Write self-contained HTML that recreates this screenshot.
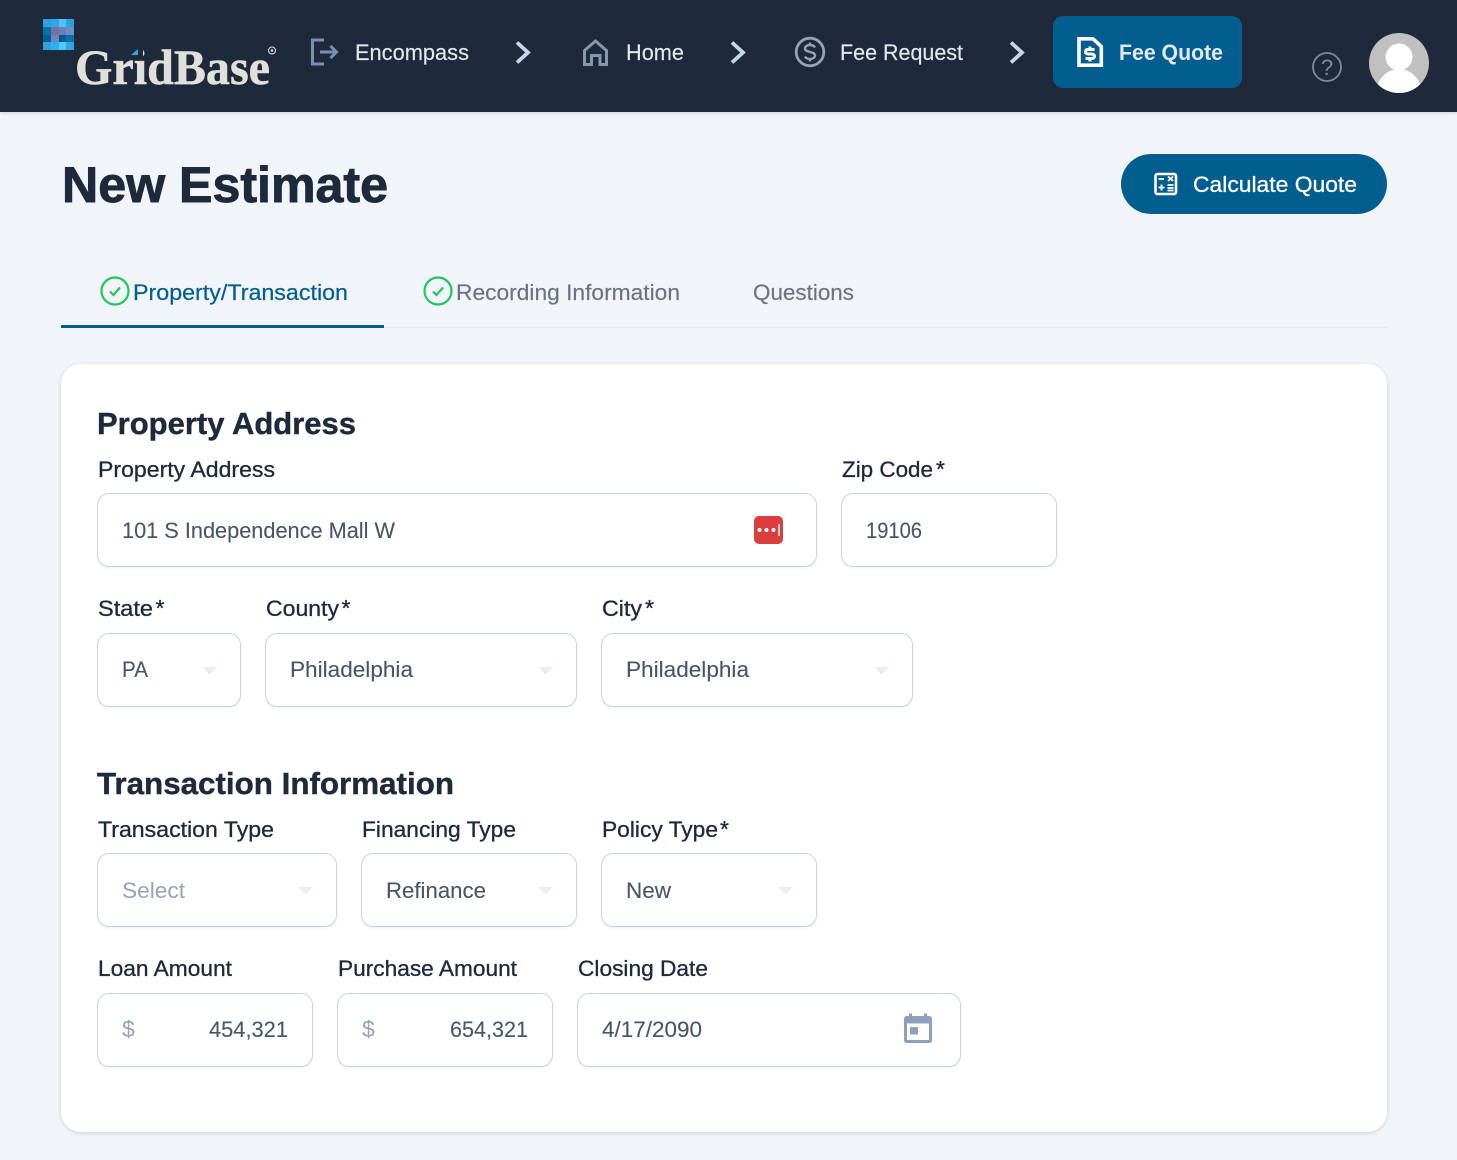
<!DOCTYPE html>
<html lang="en">
<head>
<meta charset="utf-8">
<title>New Estimate</title>
<style>
html,body{margin:0;padding:0;width:1457px;height:1160px;overflow:hidden;background:#f1f5f9;font-family:"Liberation Sans",sans-serif}
.abs{position:absolute;box-sizing:border-box}
#nav{left:0;top:0;width:1457px;height:112px;background:#1e293b;box-shadow:0 1px 3px rgba(0,0,0,.15)}
#fq{left:1053px;top:16px;width:189px;height:72px;background:#025e8f;border-radius:10px}
#cq{left:1121px;top:154px;width:266px;height:60px;background:#025e8f;border-radius:30px}
#card{left:61px;top:364px;width:1326px;height:768px;background:#fff;border-radius:20px;box-shadow:0 1px 4px rgba(15,23,42,.16)}
.i{position:absolute;box-sizing:border-box;background:#fff;border:1px solid #cbd5e1;border-radius:12px;height:74px;box-shadow:0 1px 2px rgba(15,23,42,.07)}
#overlay{position:absolute;left:0;top:0}
text{font-family:"Liberation Sans",sans-serif}
.nv{font-size:22px;fill:#e2e8f0;stroke:#e2e8f0;stroke-width:.15px}
.l{font-size:22px;fill:#1e293b;stroke:#1e293b;stroke-width:.3px}
.v{font-size:22px;fill:#475569;stroke:#475569;stroke-width:.1px}
.h{font-size:31px;font-weight:700;fill:#1e293b;stroke:#1e293b;stroke-width:.4px}
.t{font-size:22px;fill:#6b7280;stroke:#6b7280;stroke-width:.15px}
</style>
</head>
<body>
<div class="abs" id="nav"></div>
<div class="abs" id="fq"></div>
<div class="abs" id="cq"></div>
<div class="abs" style="left:61px;top:327px;width:1326px;height:1px;background:#e2e8f0"></div>
<div class="abs" style="left:61px;top:325px;width:323px;height:3px;background:#025e8f"></div>
<div class="abs" id="card"></div>

<div class="i" style="left:97px;top:493px;width:720px"></div>
<div class="i" style="left:841px;top:493px;width:216px"></div>
<div class="i" style="left:97px;top:633px;width:144px"></div>
<div class="i" style="left:265px;top:633px;width:312px"></div>
<div class="i" style="left:601px;top:633px;width:312px"></div>
<div class="i" style="left:97px;top:853px;width:240px"></div>
<div class="i" style="left:361px;top:853px;width:216px"></div>
<div class="i" style="left:601px;top:853px;width:216px"></div>
<div class="i" style="left:97px;top:993px;width:216px"></div>
<div class="i" style="left:337px;top:993px;width:216px"></div>
<div class="i" style="left:577px;top:993px;width:384px"></div>

<svg id="overlay" width="1457" height="1160" viewBox="0 0 1457 1160" xmlns="http://www.w3.org/2000/svg">
  <!-- logo mosaic -->
  <g shape-rendering="crispEdges">
    <rect x="43" y="19" width="8" height="8" fill="#2f9fdf"/><rect x="51" y="19" width="8" height="8" fill="#2fa8ea"/><rect x="59" y="19" width="7" height="8" fill="#4cc4f5"/><rect x="66" y="19" width="8" height="8" fill="#2f9fdf"/>
    <rect x="43" y="27" width="8" height="8" fill="#0672a8"/><rect x="51" y="27" width="8" height="8" fill="#7a6f9f"/><rect x="59" y="27" width="7" height="8" fill="#6a80b5"/><rect x="66" y="27" width="8" height="8" fill="#6a90c5"/>
    <rect x="43" y="35" width="8" height="7" fill="#04608f"/><rect x="51" y="35" width="8" height="7" fill="#6a86bd"/><rect x="59" y="35" width="7" height="7" fill="#045a8c"/><rect x="66" y="35" width="8" height="7" fill="#0675ae"/>
    <rect x="43" y="42" width="8" height="8" fill="#2fa0e0"/><rect x="51" y="42" width="8" height="8" fill="#2fb0ee"/><rect x="59" y="42" width="7" height="8" fill="#4fc8fa"/><rect x="66" y="42" width="8" height="8" fill="#2fa5e5"/>
  </g>
  <text x="75" y="84" textLength="195" lengthAdjust="spacingAndGlyphs" style="font-family:'Liberation Serif',serif;font-weight:700;font-size:50px;fill:#e0e1da;stroke:#e0e1da;stroke-width:.5px">GridBase</text>
  <rect x="128" y="45" width="15" height="14.500" fill="#1e293b"/>
  <path d="M131 55 L138 49 V55 Z" fill="#2fa8ea"/>
  <circle cx="272" cy="50.500" r="3.500" fill="none" stroke="#e0e1da" stroke-width="1"/>
  <circle cx="272" cy="50.500" r="1.300" fill="#e0e1da"/>

  <!-- breadcrumb icons -->
  <path d="M324 40 H312.500 V64 H324" fill="none" stroke="#7d8fb0" stroke-width="3"/>
  <path d="M320 52 H336 M330.500 46 L336.500 52 L330.500 58" fill="none" stroke="#7d8fb0" stroke-width="3"/>
  <text class="nv" x="355" y="60" textLength="114" lengthAdjust="spacingAndGlyphs">Encompass</text>

  <path d="M517 42.500 L528 52.500 L517 62.500" fill="none" stroke="#c5d5ea" stroke-width="3.800"/>
  <path d="M595.500 41 L584.500 50.500 V64.500 H591.500 V55.500 H600 V64.500 H606.500 V50.500 Z" fill="none" stroke="#8797ad" stroke-width="3"/>
  <text class="nv" x="626" y="60" textLength="58" lengthAdjust="spacingAndGlyphs">Home</text>

  <path d="M732 42.500 L743 52.500 L732 62.500" fill="none" stroke="#c5d5ea" stroke-width="3.800"/>
  <circle cx="810" cy="52" r="13.800" fill="none" stroke="#94a3b8" stroke-width="2.800"/>
  <path d="M815 47.500 C814 45.500 812 45 810 45 C807 45 805 46.500 805 48.500 C805 53 815 51 815 55.500 C815 57.500 813 59 810 59 C808 59 806 58.500 805 56.500 M810 42.500 V45 M810 59 V61.500" fill="none" stroke="#94a3b8" stroke-width="2.400"/>
  <text class="nv" x="840" y="60" textLength="123" lengthAdjust="spacingAndGlyphs">Fee Request</text>

  <path d="M1011 42.500 L1022 52.500 L1011 62.500" fill="none" stroke="#c5d5ea" stroke-width="3.800"/>
  <path d="M1079 38.800 H1093 L1101.300 46.500 V65.200 H1079 Z" fill="none" stroke="#fff" stroke-width="3.600"/>
  <path d="M1094.500 49.500 H1088 C1086 49.500 1085.500 50.500 1085.500 51.700 C1085.500 53 1086.500 54 1088 54 H1092 C1093.500 54 1094.500 55 1094.500 56.300 C1094.500 57.500 1093.500 58.500 1092 58.500 H1085.500 M1090 46.500 V49.500 M1090 58.500 V61.500" fill="none" stroke="#fff" stroke-width="3"/>
  <text x="1119" y="60" textLength="104" lengthAdjust="spacingAndGlyphs" style="font-size:22px;font-weight:700;fill:#e2e8f0">Fee Quote</text>

  <!-- help + avatar -->
  <circle cx="1327" cy="67" r="14" fill="none" stroke="#7d8ba0" stroke-width="1.800"/>
  <text x="1327" y="75" text-anchor="middle" style="font-size:22px;fill:#7d8ba0">?</text>
  <defs><clipPath id="av"><circle cx="1399" cy="63" r="30"/></clipPath></defs>
  <circle cx="1399" cy="63" r="30" fill="#c0c0c0"/>
  <g clip-path="url(#av)" fill="#fff">
    <circle cx="1399" cy="57" r="13.500"/>
    <ellipse cx="1399" cy="94" rx="23" ry="25"/>
  </g>

  <!-- header row -->
  <text x="62" y="202" textLength="326" lengthAdjust="spacingAndGlyphs" style="font-size:50px;font-weight:700;fill:#1e293b;stroke:#1e293b;stroke-width:.9px">New Estimate</text>
  <rect x="1155.500" y="174" width="20.500" height="20" rx="2" fill="none" stroke="#fff" stroke-width="2.600"/>
  <path d="M1158.500 179 H1164 M1168 176.500 L1173 181 M1173 176.500 L1168 181 M1158.500 187.500 H1164.500 M1161.500 184.500 V190.500 M1167.500 185 H1173.500 M1167.500 188 H1173.500 M1167.500 190.500 H1173.500" fill="none" stroke="#fff" stroke-width="1.800"/>
  <text x="1193" y="192" textLength="164" lengthAdjust="spacingAndGlyphs" style="font-size:22px;fill:#fff;stroke:#fff;stroke-width:.3px">Calculate Quote</text>

  <!-- tabs -->
  <circle cx="115" cy="291" r="13.500" fill="none" stroke="#22c55e" stroke-width="2.200"/>
  <path d="M110 291.500 L113.500 295 L120 287.500" fill="none" stroke="#22c55e" stroke-width="2.200"/>
  <text x="133" y="300" textLength="215" lengthAdjust="spacingAndGlyphs" style="font-size:22px;fill:#025e8f;stroke:#025e8f;stroke-width:.2px">Property/Transaction</text>
  <circle cx="438" cy="291" r="13.500" fill="none" stroke="#22c55e" stroke-width="2.200"/>
  <path d="M433 291.500 L436.500 295 L443 287.500" fill="none" stroke="#22c55e" stroke-width="2.200"/>
  <text class="t" x="456" y="300" textLength="224" lengthAdjust="spacingAndGlyphs">Recording Information</text>
  <text class="t" x="753" y="300" textLength="101" lengthAdjust="spacingAndGlyphs">Questions</text>

  <!-- property address -->
  <text class="h" x="97" y="434" textLength="259" lengthAdjust="spacingAndGlyphs">Property Address</text>
  <text class="l" x="98" y="477" textLength="177" lengthAdjust="spacingAndGlyphs">Property Address</text>
  <text class="l" x="842" y="477" textLength="91" lengthAdjust="spacingAndGlyphs">Zip Code</text>
  <text class="l" x="936" y="477" style="font-size:23px">*</text>
  <text class="v" x="122" y="538" textLength="273" lengthAdjust="spacingAndGlyphs">101 S Independence Mall W</text>
  <rect x="754" y="516" width="29" height="28" rx="5" fill="#dc3d3d"/>
  <circle cx="759.500" cy="530" r="2" fill="#fff"/><circle cx="766.500" cy="530" r="2" fill="#fff"/><circle cx="773.500" cy="530" r="2" fill="#fff"/>
  <rect x="778" y="524" width="2" height="12" fill="#f5c6c6"/>
  <text class="v" x="866" y="538" textLength="56" lengthAdjust="spacingAndGlyphs">19106</text>

  <text class="l" x="98" y="616" textLength="55" lengthAdjust="spacingAndGlyphs">State</text>
  <text class="l" x="155.500" y="616" style="font-size:23px">*</text>
  <text class="l" x="266" y="616" textLength="73" lengthAdjust="spacingAndGlyphs">County</text>
  <text class="l" x="341.500" y="616" style="font-size:23px">*</text>
  <text class="l" x="602" y="616" textLength="40" lengthAdjust="spacingAndGlyphs">City</text>
  <text class="l" x="645" y="616" style="font-size:23px">*</text>
  <text class="v" x="122" y="677" textLength="26" lengthAdjust="spacingAndGlyphs">PA</text>
  <path d="M202 667 H217 L209.500 674.500 Z" fill="#e8edf4"/>
  <text class="v" x="290" y="677" textLength="123" lengthAdjust="spacingAndGlyphs">Philadelphia</text>
  <path d="M538 667 H553 L545.500 674.500 Z" fill="#e8edf4"/>
  <text class="v" x="626" y="677" textLength="123" lengthAdjust="spacingAndGlyphs">Philadelphia</text>
  <path d="M874 667 H889 L881.500 674.500 Z" fill="#e8edf4"/>

  <!-- transaction -->
  <text class="h" x="97" y="794" textLength="357" lengthAdjust="spacingAndGlyphs">Transaction Information</text>
  <text class="l" x="98" y="837" textLength="176" lengthAdjust="spacingAndGlyphs">Transaction Type</text>
  <text class="l" x="362" y="837" textLength="154" lengthAdjust="spacingAndGlyphs">Financing Type</text>
  <text class="l" x="602" y="837" textLength="116" lengthAdjust="spacingAndGlyphs">Policy Type</text>
  <text class="l" x="720" y="837" style="font-size:23px">*</text>
  <text x="122" y="898" textLength="63" lengthAdjust="spacingAndGlyphs" style="font-size:22px;fill:#94a3b8">Select</text>
  <path d="M298 887 H313 L305.500 894.500 Z" fill="#e8edf4"/>
  <text class="v" x="386" y="898" textLength="100" lengthAdjust="spacingAndGlyphs">Refinance</text>
  <path d="M538 887 H553 L545.500 894.500 Z" fill="#e8edf4"/>
  <text class="v" x="626" y="898" textLength="45" lengthAdjust="spacingAndGlyphs">New</text>
  <path d="M778 887 H793 L785.500 894.500 Z" fill="#e8edf4"/>

  <text class="l" x="98" y="976" textLength="134" lengthAdjust="spacingAndGlyphs">Loan Amount</text>
  <text class="l" x="338" y="976" textLength="179" lengthAdjust="spacingAndGlyphs">Purchase Amount</text>
  <text class="l" x="578" y="976" textLength="130" lengthAdjust="spacingAndGlyphs">Closing Date</text>
  <text x="122" y="1037" style="font-size:23px;fill:#94a3b8">$</text>
  <text class="v" x="209" y="1037" textLength="79" lengthAdjust="spacingAndGlyphs">454,321</text>
  <text x="362" y="1037" style="font-size:23px;fill:#94a3b8">$</text>
  <text class="v" x="450" y="1037" textLength="78" lengthAdjust="spacingAndGlyphs">654,321</text>
  <text class="v" x="602" y="1037" textLength="100" lengthAdjust="spacingAndGlyphs">4/17/2090</text>
  <path d="M909 1013.500 H912 V1016 H924 V1013.500 H927 V1016 H929 Q932 1016 932 1019 V1040 Q932 1043 929 1043 H907 Q904 1043 904 1040 V1019 Q904 1016 907 1016 H909 Z M907 1023.500 V1040 H929 V1023.500 Z" fill="#8fa0bc" fill-rule="evenodd"/>
  <rect x="910" y="1027" width="8" height="7.500" fill="#8fa0bc"/>
</svg>
</body>
</html>
